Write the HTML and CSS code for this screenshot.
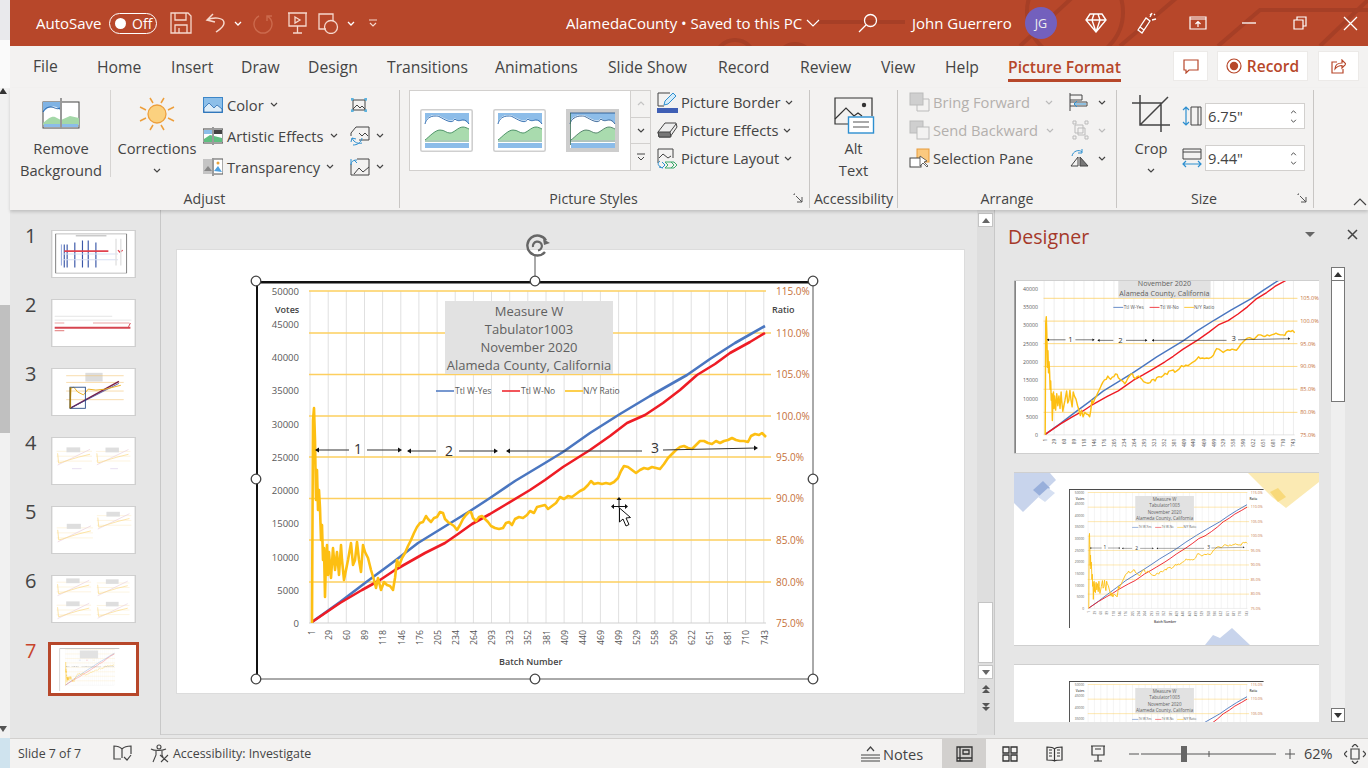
FILE: index.html
```html
<!DOCTYPE html>
<html lang="en">
<head>
<meta charset="utf-8">
<title>AlamedaCounty - PowerPoint</title>
<link rel="stylesheet" href="styles.css">
</head>
<body>
<svg class="sprite" xmlns="http://www.w3.org/2000/svg">
  <symbol id="chev" viewBox="0 0 8 5"><path d="M1 1l3 3 3-3" fill="none" stroke="#444" stroke-width="1.2"/></symbol>
  <symbol id="chevw" viewBox="0 0 8 5"><path d="M1 1l3 3 3-3" fill="none" stroke="#fff" stroke-width="1.3"/></symbol>
  <symbol id="launch" viewBox="0 0 10 10"><path d="M1 1v1M1 1h1M3 3l6 6M9 4v5H4" fill="none" stroke="#555" stroke-width="1"/></symbol>

  <symbol id="pic" viewBox="0 0 53 43">
    <rect x=".8" y=".8" width="51.4" height="41.4" rx="1.5" fill="#fff" stroke="#cfcfcf" stroke-width="1.6"/>
    <path d="M5 4h44v11c-2-3-4-4-6-4s-5 2-8-2c-2 3-4 3-7 2s-6-3-8-4-3-1-5-1c-5 0-9 3-10 8z" fill="#8dbde9"/>
    <path d="M5 15c1-5 5-8 10-8 2 0 3 0 5 1s5 3 8 4 5 1 7-2c3 3 6 1 8 1s4 1 6 4" fill="none" stroke="#1d5fa8" stroke-width=".9"/>
    <path d="M5 31c4-3 10-10 15-10s6 3 10 3 8-6 13-6c2 0 4 1 6 2v11z" fill="#a9dbae"/>
    <path d="M5 31c4-3 10-10 15-10s6 3 10 3 8-6 13-6c2 0 4 1 6 2M5 32h44" fill="none" stroke="#2f7d4f" stroke-width=".8"/>
    <rect x="5" y="34" width="44" height="5" fill="#8cbce9"/>
  </symbol>
  <symbol id="pic3" viewBox="0 0 53 43">
    <rect width="53" height="43" fill="#cdcdcd"/>
    <rect x="4" y="4" width="45" height="35" fill="#fff"/>
    <path d="M4 4h45v11c-2-3-4-4-6-4s-5 2-8-2c-2 3-4 3-7 2s-6-3-8-4-3-1-5-1c-5 0-10 3-11 8z" fill="#8dbde9"/>
    <path d="M4 15c1-5 6-8 11-8 2 0 3 0 5 1s5 3 8 4 5 1 7-2c3 3 6 1 8 1s4 1 6 4M4 4h45" fill="none" stroke="#2a5a90" stroke-width=".9"/>
    <path d="M5 31c4-3 10-10 15-10s6 3 10 3 8-6 13-6c2 0 4 1 6 2v11z" fill="#a9dbae"/>
    <path d="M5 31c4-3 10-10 15-10s6 3 10 3 8-6 13-6c2 0 4 1 6 2M4 32h45M4.5 4v32" fill="none" stroke="#3a6d55" stroke-width=".8"/>
    <rect x="5" y="34" width="44" height="5" fill="#8cbce9"/>
  </symbol>

  <symbol id="plot" viewBox="256 281 557 398">
    <rect x="256" y="281" width="557" height="398" fill="#fff"/>
    <path d="M310 291V623M328.2 291V623M346.3 291V623M364.5 291V623M382.6 291V623M400.8 291V623M418.9 291V623M437.1 291V623M455.2 291V623M473.4 291V623M491.5 291V623M509.7 291V623M527.8 291V623M546 291V623M564.1 291V623M582.3 291V623M600.4 291V623M618.6 291V623M636.7 291V623M654.9 291V623M673 291V623M691.2 291V623M709.3 291V623M727.5 291V623M745.6 291V623M763.8 291V623" stroke="#e0e0e0" stroke-width="1" fill="none"/>
    <path d="M309 623H766" stroke="#d0d0d0" stroke-width="1"/>
    <path d="M309 291H766M309 333H771M309 374.500H771M309 416H771M309 457H771M309 498.500H771M309 540H771M309 582H771" stroke="#fdcf5f" stroke-width="1.4" fill="none"/>
    <rect x="445" y="301" width="168" height="73" fill="#e2e2e2"/>
    <polyline points="312,622 340,602 365,583 392,563 418,543 444,527 470,511 490,498 515,481 545,463 563,452 590,433 620,414 650,396 687,375 710,359 735,343 765,326" fill="none" stroke="#4a76c0" stroke-width="2.6" stroke-linejoin="round"/>
    <polyline points="312,622 340,603 362,590 380,580 395,570 425,553 445,543 458,534 472,524 490,514 505,505 530,490 545,480 563,467 590,450 610,436 627,423 645,415 663,403 680,390 697,375 715,364 730,353 750,342 765,333" fill="none" stroke="#ee1c25" stroke-width="2.6" stroke-linejoin="round"/>
    <polyline points="312,623 313,420 314,408 315,440 316,500 317,470 318,510 319,490 320,508 321,540 322,525 323,560 324,548 325,597 326,560 327,545 328,575 329,552 331,578 333,548 335,570 337,552 339,575 341,545 342,560 344,580 346,570 348,560 351,543 353,565 355,560 357,542 359,560 361,572 363,545 365,552 368,558 371,570 374,580 376,588 378,578 381,590 384,582 387,585 390,586 393,590 395,578 397,560 399,566 402,558 405,553 408,546 411,540 414,533 417,527 420,523 423,522 426,516 428,519 431,522 434,518 437,517 440,512 443,513 445,519 448,522 451,524 454,526 457,530 460,525 463,519 466,515 469,512 471,512 473,518 476,521 479,517 482,516 485,519 488,522 491,526 495,528 499,529 503,528 506,523 509,522 512,525 515,519 519,517 523,518 527,515 530,511 534,513 537,507 541,506 545,505 548,509 552,506 556,503 560,497 564,499 568,496 572,497 576,494 580,491 584,489 588,485 591,481 594,484 598,483 602,484 606,483 610,484 614,482 618,478 621,471 624,466 628,467 632,470 636,473 640,470 644,468 648,469 652,467 656,468 660,469 664,464 668,458 672,454 676,450 680,447 684,446 688,448 692,449 696,445 700,441 704,441 708,443 712,444 716,441 720,443 724,441 728,440 732,438 736,440 740,441 744,441 748,442 751,436 755,434 759,435 762,433 764,435 766,437" fill="none" stroke="#fdbf12" stroke-width="2.6" stroke-linejoin="round"/>
    <path d="M316 450H349M367 450H400M408 451H436M459 451H496M507 451H642M663 450L756 448" stroke="#333" stroke-width="1.2" fill="none"/>
    <g fill="#111"><path d="M315 450l4-2.500v5zM402 450l-4-2.500v5zM407 451l4-2.500v5zM498 451l-4-2.500v5zM506 451l4-2.500v5zM758 448l-4-2.500v5z"/></g>
    <path d="M436 391H454" stroke="#4a76c0" stroke-width="1.500"/><path d="M502 391H520" stroke="#ee1c25" stroke-width="1.500"/><path d="M565 391H583" stroke="#fdbf12" stroke-width="1.500"/>
    <path d="M256.500 679V282H813" fill="none" stroke="#111" stroke-width="3"/>
  </symbol>

  <symbol id="chart" viewBox="256 281 557 398">
    <use href="#plot" x="256" y="281" width="557" height="398"/>
    <g class="ct ct-title">
      <text x="529" y="315.500">Measure W</text><text x="529" y="333.500">Tabulator1003</text><text x="529" y="351.500">November 2020</text><text x="529" y="369.500">Alameda County, California</text>
    </g>
    <g class="ct ct-num"><text x="358" y="454">1</text><text x="449" y="456">2</text><text x="655" y="453">3</text></g>
    <g class="ct ct-leg"><text x="455" y="394">Ttl W-Yes</text><text x="521" y="394">Ttl W-No</text><text x="583" y="394">N/Y Ratio</text></g>
    <g class="ct ct-yl">
      <text x="299" y="294.500">50000</text><text x="299" y="327.500">45000</text><text x="299" y="361">40000</text><text x="299" y="394">35000</text><text x="299" y="427.500">30000</text><text x="299" y="460.500">25000</text><text x="299" y="494">20000</text><text x="299" y="527">15000</text><text x="299" y="560.500">10000</text><text x="299" y="593.500">5000</text><text x="299" y="627">0</text>
    </g>
    <g class="ct ct-yr">
      <text x="776" y="294.500">115.0%</text><text x="776" y="336.500">110.0%</text><text x="776" y="378">105.0%</text><text x="776" y="419.500">100.0%</text><text x="776" y="460.500">95.0%</text><text x="776" y="502">90.0%</text><text x="776" y="543.500">85.0%</text><text x="776" y="585.500">80.0%</text><text x="776" y="627">75.0%</text>
    </g>
    <g class="ct ct-b"><text x="275" y="312.500">Votes</text><text x="772" y="312.500">Ratio</text><text x="499" y="664.500">Batch Number</text></g>
    <g class="ct ct-x">
      <text transform="rotate(-90 315 630)" x="315" y="630">1</text><text transform="rotate(-90 332 630)" x="332" y="630">29</text><text transform="rotate(-90 350 630)" x="350" y="630">60</text><text transform="rotate(-90 368 630)" x="368" y="630">89</text><text transform="rotate(-90 386 630)" x="386" y="630">118</text><text transform="rotate(-90 404.500 630)" x="404.500" y="630">146</text><text transform="rotate(-90 422.500 630)" x="422.500" y="630">176</text><text transform="rotate(-90 440.500 630)" x="440.500" y="630">205</text><text transform="rotate(-90 458.500 630)" x="458.500" y="630">234</text><text transform="rotate(-90 477 630)" x="477" y="630">264</text><text transform="rotate(-90 495 630)" x="495" y="630">293</text><text transform="rotate(-90 513 630)" x="513" y="630">323</text><text transform="rotate(-90 531 630)" x="531" y="630">352</text><text transform="rotate(-90 549.500 630)" x="549.500" y="630">381</text><text transform="rotate(-90 567.500 630)" x="567.500" y="630">409</text><text transform="rotate(-90 585.500 630)" x="585.500" y="630">440</text><text transform="rotate(-90 604 630)" x="604" y="630">469</text><text transform="rotate(-90 622 630)" x="622" y="630">499</text><text transform="rotate(-90 640 630)" x="640" y="630">529</text><text transform="rotate(-90 658 630)" x="658" y="630">558</text><text transform="rotate(-90 676.500 630)" x="676.500" y="630">590</text><text transform="rotate(-90 694.500 630)" x="694.500" y="630">622</text><text transform="rotate(-90 712.500 630)" x="712.500" y="630">651</text><text transform="rotate(-90 731 630)" x="731" y="630">681</text><text transform="rotate(-90 749 630)" x="749" y="630">710</text><text transform="rotate(-90 767.500 630)" x="767.500" y="630">743</text>
    </g>
  </symbol>

  <symbol id="faint" viewBox="0 0 40 22">
    <path d="M2 6H38M2 11H38M2 16H38" stroke="#fbecc9" stroke-width=".6" fill="none"/>
    <rect x="12" y="2" width="14" height="5" fill="#dedede"/>
    <path d="M3 20L36 4" stroke="#ecd5df" stroke-width=".8" fill="none"/>
    <path d="M3 8L4 18 8 17 14 15 24 12 36 9" stroke="#fbdd92" stroke-width=".8" fill="none"/>
  </symbol>
</svg>

<div class="screen">
  <aside class="edge">
    <div class="edge-a"></div>
    <div class="edge-b"></div>
    <div class="edge-c"><svg class="edge-arrow" width="8" height="6" viewBox="0 0 8 6"><path d="M4 0l4 6H0z" fill="#333"/></svg></div>
    <div class="edge-thumb"></div>
    <div class="edge-d"><svg class="edge-arrow" width="8" height="6" viewBox="0 0 8 6"><path d="M4 6L8 0H0z" fill="#555"/></svg></div>
    <div class="edge-e"></div>
  </aside>

  <div class="app">
    <header class="titlebar">
      <svg class="title-decor" width="1358" height="46" viewBox="10 0 1358 46"><g fill="none" stroke="#a63f26" stroke-width="4"><path d="M815 22H905"/><circle cx="735" cy="60" r="20"/><circle cx="795" cy="62" r="18"/><circle cx="1075" cy="12" r="48"/><path d="M1020 46L1075 -5M1120 46L1180 -5"/><path d="M1218 46L1260 10H1368"/><path d="M1320 46L1368 0"/></g></svg>
      <div class="qat">
        <span class="autosave">AutoSave</span>
        <span class="toggle"><span class="knob"></span><span class="off">Off</span></span>
        <svg class="q q-save" width="22" height="22" viewBox="0 0 22 22" fill="none" stroke="#f6d8cd" stroke-width="1.300"><path d="M1 1h17l3 3v17H1zM5 1v7h11V1M5 21v-8h12v8M9 21v-5"/></svg>
        <svg class="q q-undo" width="21" height="20" viewBox="0 0 21 20" fill="none" stroke="#f6d8cd" stroke-width="1.500"><path d="M8 1L2 7l8 2M2 7c6-3 17-3 17 3 0 4-5 7-8 9"/></svg>
        <svg class="q-chev" width="8" height="5"><use href="#chevw"/></svg>
        <svg class="q q-redo" width="21" height="21" viewBox="0 0 21 21" fill="none" stroke="#cc6a4d" stroke-width="1.400"><path d="M14 3a9 9 0 1 1-8 0M14 8V3h5"/></svg>
        <svg class="q q-show" width="21" height="22" viewBox="0 0 21 22" fill="none" stroke="#f6d8cd" stroke-width="1.300"><path d="M1 1h19M2 1v13h17V1M10.500 14v7M6 21h9"/><path d="M8 5l5 3-5 3z"/></svg>
        <svg class="q q-shape" width="21" height="21" viewBox="0 0 21 21" fill="none" stroke="#f6d8cd" stroke-width="1.300"><path d="M8 16H1V1h14v7"/><circle cx="13" cy="14" r="6.500"/></svg>
        <svg class="q-chev" width="8" height="5"><use href="#chevw"/></svg>
        <svg class="q-cust" width="10" height="8" viewBox="0 0 10 8" fill="none" stroke="#f6d8cd" stroke-width="1.200"><path d="M1 1h8M2 4l3 3 3-3"/></svg>
      </div>
      <div class="doc">
        <span class="doc-name">AlamedaCounty • Saved to this PC</span>
        <svg class="doc-chev" width="14" height="8" viewBox="0 0 14 8"><path d="M1 1l6 6 6-6" fill="none" stroke="#fff" stroke-width="1.200"/></svg>
        <svg class="doc-search" width="20" height="20" viewBox="0 0 20 20" fill="none" stroke="#fff" stroke-width="1.300"><circle cx="12.500" cy="7.500" r="6"/><path d="M8 12l-7 7"/></svg>
      </div>
      <div class="who">
        <span class="who-name">John Guerrero</span>
        <span class="avatar">JG</span>
        <span class="wb"><svg width="22" height="20" viewBox="0 0 22 20" fill="none" stroke="#fff" stroke-width="1.400"><path d="M5 1h12l4 6-10 12L1 7zM1 7h20M7 7l4 12 4-12M7 7l2-6M15 7l-2-6"/></svg></span>
        <span class="wb"><svg width="20" height="22" viewBox="0 0 20 22" fill="none" stroke="#fff" stroke-width="1.300"><path d="M1 18l4 3 8-12-4-3zM3 15l4 3M13 5l2-4M15 8l4-1M13 2l1 1M17 3l1-1"/></svg></span>
        <span class="wb"><svg width="18" height="14" viewBox="0 0 18 14" fill="none" stroke="#fff" stroke-width="1.200"><path d="M1 1h16v12H1zM1 3h16M9 11V6M6.500 8L9 5.500 11.500 8"/></svg></span>
        <span class="wb"><svg width="14" height="2" viewBox="0 0 14 2"><path d="M0 1h14" stroke="#fff" stroke-width="1.300"/></svg></span>
        <span class="wb"><svg width="14" height="14" viewBox="0 0 14 14" fill="none" stroke="#fff" stroke-width="1.200"><path d="M1 4h9v9H1zM4 4V1h9v9h-3"/></svg></span>
        <span class="wb wb-close"><svg width="15" height="15" viewBox="0 0 15 15"><path d="M1 1l13 13M14 1L1 14" stroke="#fff" stroke-width="1.300"/></svg></span>
      </div>
    </header>

    <nav class="tabs">
      <span class="tab tab-file">File</span><span class="tab">Home</span><span class="tab">Insert</span><span class="tab">Draw</span><span class="tab">Design</span><span class="tab">Transitions</span><span class="tab">Animations</span><span class="tab">Slide Show</span><span class="tab">Record</span><span class="tab">Review</span><span class="tab">View</span><span class="tab">Help</span><span class="tab tab-on">Picture Format</span>
      <span class="tbtn"><svg width="16" height="15" viewBox="0 0 16 15" fill="none" stroke="#b7472a" stroke-width="1.200"><path d="M1 1h14v10H6l-3 3v-3H1z"/></svg></span>
      <span class="gapb"></span>
      <span class="tbtn tbtn-rec"><svg width="16" height="16" viewBox="0 0 16 16"><circle cx="8" cy="8" r="7" fill="none" stroke="#b7472a" stroke-width="1.200"/><circle cx="8" cy="8" r="4.200" fill="#b7472a"/></svg><b>Record</b></span>
      <span class="gapb"></span>
      <span class="tbtn"><svg width="15" height="15" viewBox="0 0 15 15" fill="none" stroke="#b7472a" stroke-width="1.200"><path d="M6 3H1v11h11v-4M4 10c0-4 3-6 7-6V1l4 4-4 4V6.500c-3 0-5 1-7 3.500z"/></svg></span>
    </nav>

    <section class="ribbon">
      <div class="group g-adjust">
        <div class="gbody">
          <div class="big big-sep">
            <span class="bigico"><svg width="38" height="31" viewBox="0 0 38 31"><rect x="1" y="4" width="36" height="26" fill="#fff" stroke="#444"/><path d="M1 4h18v10C15 6 6 7 1 15z" fill="#7fb3e4"/><path d="M1 25c5-4 8-7 12-6l6 3 9-4 9 2v7H1z" fill="#a4d8a8"/><rect x="2" y="26" width="34" height="3" fill="#8cbce9"/><path d="M1 14c2-4 5-5 8-5 3 0 6 3 9 1" fill="none" stroke="#1d5fa8"/><rect x="18" y="0" width="2" height="31" fill="#999"/></svg></span>
            <span class="bl">Remove</span><span class="bl">Background</span>
          </div>
          <div class="big">
            <span class="bigico"><svg width="36" height="36" viewBox="0 0 36 36"><circle cx="18" cy="18" r="9" fill="#fbd17f" stroke="#ed9f3c" stroke-width="1.300"/><path d="M11 2l3 5M25 2l-3 5M1 11l6 3M35 11l-6 3M1 25l6-3M35 25l-6-3M11 34l3-5M25 34l-3-5" stroke="#ed9f3c" stroke-width="1.500" fill="none"/></svg></span>
            <span class="bl">Corrections</span><span class="bl"><svg width="8" height="5"><use href="#chev"/></svg></span>
          </div>
          <div class="col col-adj">
            <div class="row"><svg width="20" height="16" viewBox="0 0 20 16"><rect x=".5" y=".5" width="19" height="15" fill="#8cbfe9" stroke="#3c86c8"/><path d="M1 11l5-5 5 5 3-3 5 4v3H1z" fill="#dcedf9" stroke="#1d5fa8" stroke-width=".7"/></svg><span>Color</span><svg class="cv" width="8" height="5"><use href="#chev"/></svg></div>
            <div class="row"><svg width="20" height="18" viewBox="0 0 20 18"><rect y="2" width="20" height="14" fill="#fff" stroke="#444"/><rect x="1" y="3" width="18" height="4" fill="#444"/><path d="M1 12l6-4 12 3v4H1z" fill="#5fbf80"/><rect x="1" y="3" width="8" height="4" fill="#8cbfe9"/><rect x="9" y="0" width="2" height="18" fill="#9a9a9a"/></svg><span>Artistic Effects</span><svg class="cv" width="8" height="5"><use href="#chev"/></svg></div>
            <div class="row"><svg width="20" height="18" viewBox="0 0 20 18"><rect y="1" width="9" height="15" fill="#c4c4c4"/><rect x="10" y="1" width="10" height="15" fill="#fff" stroke="#555"/><path d="M1 13l4-5 4 5z" fill="#888"/><path d="M11 13l4-5 4 6z" fill="#4ea1e0"/><circle cx="15" cy="5" r="1.500" fill="#e8a33c"/><rect x="9" y="0" width="2" height="18" fill="#9a9a9a"/></svg><span>Transparency</span><svg class="cv" width="8" height="5"><use href="#chev"/></svg></div>
          </div>
          <div class="col col-adj2">
            <div class="row"><svg width="18" height="16" viewBox="0 0 18 16"><path d="M3 3h12v10H3z" fill="none" stroke="#444"/><path d="M3 12l4-4 3 3 2-2 3 3" fill="none" stroke="#444"/><path d="M1 2h3M2 1v3M14 2h3M16 1v3M1 14h3M2 12v3M14 14h3M16 12v3" stroke="#2d9fd9" fill="none"/></svg></div>
            <div class="row"><svg width="20" height="20" viewBox="0 0 20 20"><path d="M6 1h13v13H9M6 1L1 7v3" fill="none" stroke="#444"/><path d="M9 7l3 3 3-3 3 3" fill="none" stroke="#444"/><path d="M2 12c2 5 7 6 10 5M2 12l-1 4M2 12l4 1M12 12c-1 5-5 7-9 7" fill="none" stroke="#2d8fd0"/></svg><svg class="cv2" width="8" height="5"><use href="#chev"/></svg></div>
            <div class="row"><svg width="20" height="18" viewBox="0 0 20 18"><path d="M1 6v11h18V1H7" fill="none" stroke="#444"/><path d="M4 16l5-6 4 4 6-5" fill="none" stroke="#444"/><path d="M1 7c0-4 3-5 6-5M1 1v5M7 5L4 2" fill="none" stroke="#2d8fd0"/></svg><svg class="cv2" width="8" height="5"><use href="#chev"/></svg></div>
          </div>
        </div>
        <div class="glabel"><span>Adjust</span></div>
      </div>

      <div class="group g-styles">
        <div class="gbody">
          <div class="gallery">
            <div class="gal-items"><svg width="53" height="43"><use href="#pic"/></svg><svg width="53" height="43"><use href="#pic"/></svg><svg width="53" height="43"><use href="#pic3"/></svg></div>
            <div class="gal-scroll">
              <span><svg width="8" height="5" viewBox="0 0 8 5"><path d="M1 4l3-3 3 3" fill="none" stroke="#c4c4c4" stroke-width="1.200"/></svg></span>
              <span><svg width="8" height="5"><use href="#chev"/></svg></span>
              <span><svg width="10" height="9" viewBox="0 0 10 9" fill="none" stroke="#444"><path d="M1 1h8M2 4l3 3 3-3"/></svg></span>
            </div>
          </div>
          <div class="col col-pic">
            <div class="row28"><svg width="21" height="21" viewBox="0 0 21 21"><rect y="16" width="21" height="5" fill="#3f5fb5"/><path d="M1 14V1h12M1 14h6" fill="none" stroke="#444"/><path d="M7 13l1-4 8-8 3 3-8 8z" fill="#d5ecfa" stroke="#2d8fd0"/></svg><span>Picture Border</span><svg class="cv" width="8" height="5"><use href="#chev"/></svg></div>
            <div class="row28"><svg width="21" height="18" viewBox="0 0 21 18"><path d="M1 11l7-9h11l1 4-7 10H2z" fill="#eee" stroke="#444"/><path d="M1 11h12l1 5H2z" fill="#777" stroke="#444"/><path d="M13 11l6-8" stroke="#444"/></svg><span>Picture Effects</span><svg class="cv" width="8" height="5"><use href="#chev"/></svg></div>
            <div class="row28"><svg width="21" height="21" viewBox="0 0 21 21"><path d="M1 15V1h15v9" fill="none" stroke="#444"/><path d="M2 10l4-4 5 4 3-2" fill="none" stroke="#444"/><path d="M3 13c-3 2-2 5 1 6M2 19l4 1M5 14l3 3-3 3" fill="none" stroke="#2d8fd0"/><path d="M8 14h6l3 3-3 3H8l3-3zM14 14h3l3 3-3 3h-3" fill="none" stroke="#3dab6c"/></svg><span>Picture Layout</span><svg class="cv" width="8" height="5"><use href="#chev"/></svg></div>
          </div>
        </div>
        <div class="glabel"><span>Picture Styles</span><svg class="launch" width="10" height="10"><use href="#launch"/></svg></div>
      </div>

      <div class="group g-acc">
        <div class="gbody">
          <div class="big big-fill">
            <span class="bigico"><svg class="ico-alt" width="41" height="37" viewBox="0 0 41 37"><path d="M28 27H1V1h37v18" fill="none" stroke="#333" stroke-width="1.200"/><path d="M1 22l11-11 8 8 4-3 4 3" fill="none" stroke="#333" stroke-width="1.200"/><circle cx="30" cy="8" r="2.200" fill="#333"/><rect x="14.500" y="20" width="25" height="16" fill="#fff" stroke="#2d8fd0" stroke-width="1.400"/><path d="M19 25h16M19 30h16" stroke="#555" stroke-width="1.200"/></svg></span>
            <span class="bl">Alt</span><span class="bl">Text</span>
          </div>
        </div>
        <div class="glabel"><span>Accessibility</span></div>
      </div>

      <div class="group g-arr">
        <div class="gbody">
          <div class="col col-arr1">
            <div class="row28 dim"><svg width="21" height="20" viewBox="0 0 21 20"><rect x="1" y="1" width="13" height="12" fill="#cfcfcf" stroke="#bbb"/><path d="M14 7h6v12H8v-6" fill="none" stroke="#bbb"/></svg><span>Bring Forward</span><svg class="cv3" width="8" height="5" viewBox="0 0 8 5"><path d="M1 1l3 3 3-3" fill="none" stroke="#bbb" stroke-width="1.200"/></svg></div>
            <div class="row28 dim"><svg width="21" height="20" viewBox="0 0 21 20"><rect x="1" y="1" width="13" height="12" fill="#cfcfcf" stroke="#bbb"/><rect x="8" y="7" width="12" height="12" fill="#f3f2f1" stroke="#bbb"/></svg><span>Send Backward</span><svg class="cv3 cv3b" width="8" height="5" viewBox="0 0 8 5"><path d="M1 1l3 3 3-3" fill="none" stroke="#bbb" stroke-width="1.200"/></svg></div>
            <div class="row28"><svg width="21" height="20" viewBox="0 0 21 20"><rect x="8" y="1" width="12" height="13" fill="#fbc97f" stroke="#e89b3c"/><rect x="1" y="10" width="11" height="9" fill="#fff" stroke="#444"/><path d="M11 8v10l3-3 4 4 1-1-4-4 3-1z" fill="#fff" stroke="#444" stroke-width=".8"/></svg><span>Selection Pane</span></div>
          </div>
          <div class="col col-arr2">
            <div class="row28"><svg width="20" height="20" viewBox="0 0 20 20"><path d="M1 1v18" stroke="#444" fill="none"/><path d="M1 3h12v5H1M1 10h17v4H1" fill="none" stroke="#444"/><path d="M17 12H5M8 9l-3 3 3 3" fill="none" stroke="#2d8fd0"/></svg><svg class="cv2" width="8" height="5"><use href="#chev"/></svg></div>
            <div class="row28"><svg width="20" height="20" viewBox="0 0 20 20" fill="none" stroke="#bbb"><path d="M4 1h3v3H4zM16 1h3v3h-3zM4 16h3v3H4zM16 16h3v3h-3zM6 5h8v8H6zM9 8h7v7H9z"/></svg><svg class="cv2" width="8" height="5" viewBox="0 0 8 5"><path d="M1 1l3 3 3-3" fill="none" stroke="#bbb" stroke-width="1.200"/></svg></div>
            <div class="row28"><svg width="20" height="20" viewBox="0 0 20 20"><path d="M2 18l7-9v9z" fill="none" stroke="#444"/><path d="M11 9l8 9h-8z" fill="#777" stroke="#444"/><path d="M3 8c1-5 7-7 10-4M13 1v4H9" fill="none" stroke="#2d8fd0"/></svg><svg class="cv2" width="8" height="5"><use href="#chev"/></svg></div>
          </div>
        </div>
        <div class="glabel"><span>Arrange</span></div>
      </div>

      <div class="group g-size">
        <div class="gbody">
          <div class="big big-crop">
            <span class="bigico"><svg width="38" height="38" viewBox="0 0 38 38" fill="none" stroke="#444" stroke-width="1.500"><path d="M0 8h29v29M8 0v30h30M8 30L36 2"/></svg></span>
            <span class="bl">Crop</span><span class="bl"><svg width="8" height="5"><use href="#chev"/></svg></span>
          </div>
          <div class="fields">
            <div class="field"><svg width="20" height="20" viewBox="0 0 20 20"><path d="M9 1h10v18H9zM16 1v18" fill="none" stroke="#444"/><path d="M4 1v18M1 4l3-3 3 3M1 16l3 3 3-3" fill="none" stroke="#2d8fd0" stroke-width="1.200"/></svg><span class="input">6.75"<span class="spin"><svg width="7" height="4" viewBox="0 0 8 5"><path d="M1 4l3-3 3 3" fill="none" stroke="#444" stroke-width="1.200"/></svg><svg width="7" height="4"><use href="#chev"/></svg></span></span></div>
            <div class="field"><svg width="20" height="20" viewBox="0 0 20 20"><path d="M1 1h18v10H1zM1 4h18" fill="none" stroke="#444"/><path d="M1 16h18M4 13l-3 3 3 3M16 13l3 3-3 3" fill="none" stroke="#2d8fd0" stroke-width="1.200"/></svg><span class="input">9.44"<span class="spin"><svg width="7" height="4" viewBox="0 0 8 5"><path d="M1 4l3-3 3 3" fill="none" stroke="#444" stroke-width="1.200"/></svg><svg width="7" height="4"><use href="#chev"/></svg></span></span></div>
          </div>
        </div>
        <div class="glabel"><span>Size</span><svg class="launch" width="10" height="10"><use href="#launch"/></svg></div>
      </div>

      <div class="collapse"><svg width="14" height="8" viewBox="0 0 14 8"><path d="M1 7l6-6 6 6" fill="none" stroke="#444" stroke-width="1.200"/></svg></div>
    </section>

    <main class="work">
      <aside class="slides">
        <div class="s"><span class="n">1</span>
          <svg class="th" width="85" height="48" viewBox="0 0 85 48"><rect width="85" height="48" fill="#fff"/><path d="M3 3h74M3 44h74" stroke="#777" stroke-width=".5" fill="none"/><path d="M3 3v41M77 3v41" stroke="#444" stroke-width=".7" fill="none"/><path d="M24 5h32" stroke="#bbb" stroke-width="1.200"/><path d="M12 14v24M15 14v24M23 12v26M31 10v28M37 10v28M45 12v26" stroke="#3a57a8" stroke-width="1.200"/><path d="M12 21h46" stroke="#e1414e" stroke-width="1.800"/><path d="M10 24h58M10 30h58" stroke="#d5def2" stroke-width="1"/><path d="M68 20l2 2 3-2" stroke="#e1414e" stroke-width="1.300" fill="none"/><path d="M9 14v22" stroke="#8aa0d8" stroke-width="1"/><path d="M66 8v28M71 8v28" stroke="#e3e3e3" stroke-width="1.500"/></svg>
        </div>
        <div class="s"><span class="n">2</span>
          <svg class="th" width="85" height="48" viewBox="0 0 85 48"><rect width="85" height="48" fill="#fff"/><path d="M2 17h60M2 21h80" stroke="#d9d9d9" stroke-width=".7"/><path d="M2 24h10M42 24h38" stroke="#e9a0a0" stroke-width="1"/><path d="M2 29h79" stroke="#d64550" stroke-width="2"/><path d="M2 32h10" stroke="#e58888" stroke-width="1.200"/><path d="M79 28l2-4" stroke="#d64550" stroke-width="1"/></svg>
        </div>
        <div class="s"><span class="n">3</span>
          <svg class="th" width="85" height="48" viewBox="0 0 85 48"><rect width="85" height="48" fill="#fff"/><rect x="34" y="4" width="18" height="9" fill="#ddd"/><path d="M14 7h60M14 14h60M14 23h60M14 32h60" stroke="#f4c470" stroke-width=".6" fill="none"/><path d="M18 41L69 13" stroke="#7a1d44" stroke-width="1.500"/><path d="M18 41L69 15" stroke="#3a3a8a" stroke-width=".8"/><path d="M18 41L19 20l3-1 4 5 6 3 5-6 8 1 10-1 16-4" stroke="#ecb01e" stroke-width="1" fill="none"/><rect x="18" y="19" width="16" height="22" fill="none" stroke="#1f4480" stroke-width=".9"/><rect x="17.500" y="19" width="1.600" height="22" fill="#a57a10"/></svg>
        </div>
        <div class="s"><span class="n">4</span>
          <svg class="th" width="85" height="48" viewBox="0 0 85 48"><rect width="85" height="48" fill="#fff"/><use href="#faint" x="2" y="6" width="41" height="26"/><use href="#faint" x="43" y="6" width="40" height="26"/><path d="M20 32h10M60 32h8" stroke="#d8c8e8" stroke-width=".6"/></svg>
        </div>
        <div class="s"><span class="n">5</span>
          <svg class="th" width="85" height="48" viewBox="0 0 85 48"><rect width="85" height="48" fill="#fff"/><use href="#faint" x="2" y="12" width="42" height="30"/><use href="#faint" x="44" y="1" width="40" height="26"/></svg>
        </div>
        <div class="s"><span class="n">6</span>
          <svg class="th" width="85" height="48" viewBox="0 0 85 48"><rect width="85" height="48" fill="#fff"/><use href="#faint" x="2" y="0" width="40" height="23"/><use href="#faint" x="44" y="1" width="38" height="22"/><use href="#faint" x="2" y="24" width="40" height="23"/><use href="#faint" x="44" y="24" width="38" height="23"/></svg>
        </div>
        <div class="s s-on"><span class="n">7</span>
          <svg class="th" width="85" height="48" viewBox="0 0 85 48"><rect width="85" height="48" fill="#fff"/><use href="#plot" x="8.500" y="3.300" width="60" height="43"/></svg>
        </div>
      </aside>

      <div class="canvas">
        <div class="slide">
          <svg class="pic-sel" width="557" height="398" viewBox="256 281 557 398">
            <use href="#chart" x="256" y="281" width="557" height="398"/>
            <path d="M535 256V281M813 281V679H256" fill="none" stroke="#555" stroke-width="1"/>
            <path d="M546 240.500A10 10 0 1 0 545 252" fill="none" stroke="#666" stroke-width="2.400"/>
            <path d="M533 247a4.500 4.500 0 1 1 5 3.500" fill="none" stroke="#666" stroke-width="2.200"/>
            <path d="M550 243l-6 2-1-6z" fill="#666"/>
            <g fill="#fff" stroke="#444" stroke-width="1.300"><circle cx="256" cy="281" r="4.800"/><circle cx="535" cy="281" r="4.800"/><circle cx="813" cy="281" r="4.800"/><circle cx="256" cy="479" r="4.800"/><circle cx="813" cy="479" r="4.800"/><circle cx="256" cy="679" r="4.800"/><circle cx="535" cy="679" r="4.800"/><circle cx="813" cy="679" r="4.800"/></g>
            <path d="M619 499v9M612 506.500h15" stroke="#fff" stroke-width="2.400"/>
            <path d="M619 499v9M612 506.500h15" stroke="#111" stroke-width="1"/>
            <path d="M619 497l-2.500 3h5zM611 506.500l3-2.500v5zM628 506.500l-3-2.500v5z" fill="#111"/>
            <path d="M619.500 508v14l3.500-3 3 7 3-1.500-3-6.500 4.500-.5z" fill="#fff" stroke="#111" stroke-width="1"/>
          </svg>
        </div>
      </div>

      <div class="vs">
        <span class="vbtn"><svg width="8" height="5" viewBox="0 0 8 5"><path d="M4 0l4 5H0z" fill="#666"/></svg></span>
        <span class="vthumb"></span>
        <span class="vbtn vdown"><svg width="8" height="5" viewBox="0 0 8 5"><path d="M4 5l4-5H0z" fill="#666"/></svg></span>
        <svg class="vdbl" width="8" height="9" viewBox="0 0 8 9"><path d="M4 0l4 4H0zM4 4l4 4H0z" fill="#555"/></svg>
        <svg class="vdbl vdbl2" width="8" height="9" viewBox="0 0 8 9"><path d="M4 9L8 5H0zM4 5L8 1H0z" fill="#555"/></svg>
      </div>

      <aside class="designer">
        <div class="d-head">
          <span class="d-title">Designer</span>
          <svg class="d-drop" width="10" height="5" viewBox="0 0 10 5"><path d="M0 0h10L5 5z" fill="#666"/></svg>
          <svg class="d-x" width="11" height="11" viewBox="0 0 11 11"><path d="M1 1l9 9M10 1l-9 9" stroke="#444" stroke-width="1.500"/></svg>
        </div>
        <div class="d-body">
          <div class="d-list">
            <svg class="card" width="305" height="172" viewBox="255.500 343 554.500 313"><use href="#chart" x="256" y="281" width="557" height="398"/></svg>
            <svg class="card" width="305" height="172" viewBox="0 0 305 172">
              <rect width="305" height="172" fill="#fff"/>
              <path d="M0 0h36l6 7-33 32-9-9z" fill="#c8d4ec"/><path d="M29 8l7 7-9 9-8-7z" fill="#98afdb"/><path d="M34 15l7 5-10 9-7-5z" fill="#d6e0f2"/>
              <path d="M234 0h71v9l-33 26-14-11z" fill="#fbeab3"/><path d="M256 19l8-4 8 9-8 5z" fill="#f8d97a"/>
              <path d="M191 172l8-10 7 3 12-10 18 17z" fill="#c8d4ec"/>
              <use href="#chart" x="55" y="16" width="195" height="139"/>
            </svg>
            <svg class="card" width="305" height="172" viewBox="0 0 305 172"><rect width="305" height="172" fill="#fff"/><use href="#chart" x="55" y="16" width="195" height="139"/></svg>
          </div>
          <div class="d-scroll">
            <span class="dbtn"><svg width="8" height="5" viewBox="0 0 8 5"><path d="M4 0l4 5H0z" fill="#333"/></svg></span>
            <span class="dthumb"></span>
            <span class="dbtn dbtn-dn"><svg width="8" height="5" viewBox="0 0 8 5"><path d="M4 5l4-5H0z" fill="#333"/></svg></span>
          </div>
        </div>
      </aside>
    </main>

    <footer class="status">
      <span class="st-slide">Slide 7 of 7</span>
      <svg class="st-book" width="19" height="17" viewBox="0 0 19 17" fill="none" stroke="#444" stroke-width="1.200"><path d="M9 4C7 2 4 1 1 1v13h7M9 4c2-2 5-3 9-3v8M9 4v9M11 12l3 3 4-5"/></svg>
      <svg class="st-acc" width="19" height="19" viewBox="0 0 19 19" fill="none" stroke="#444" stroke-width="1.100"><circle cx="9" cy="3" r="2"/><path d="M1 5c3 2 11 2 15 0M6 7v4l-3 7M12 7v4l1 2M10 11l8 7M18 11l-7 7"/></svg>
      <span class="st-acc-t">Accessibility: Investigate</span>
      <span class="st-notes"><svg width="19" height="16" viewBox="0 0 19 16" fill="none" stroke="#444" stroke-width="1.200"><path d="M6 5l3.500-4L13 5M0 9h19M0 12h19M0 15h19"/></svg>Notes</span>
      <span class="vw vw-on"><svg width="17" height="16" viewBox="0 0 17 16" fill="none" stroke="#333" stroke-width="1.300"><path d="M1 1h15v14H1zM4 1v14M1 12h15M7 4h6v4H7z"/></svg></span>
      <span class="vw"><svg width="16" height="16" viewBox="0 0 16 16" fill="none" stroke="#333" stroke-width="1.300"><path d="M1 1h6v6H1zM9 1h6v6H9zM1 9h6v6H1zM9 9h6v6H9z"/></svg></span>
      <span class="vw"><svg width="17" height="16" viewBox="0 0 17 16" fill="none" stroke="#333" stroke-width="1.200"><path d="M8.500 3C7 1 4 1 1 1v13c3 0 6 0 7.500 1 1.500-1 4.500-1 7.500-1V1c-3 0-6 0-7.500 2zM8.500 3v12M3 4h3M3 7h3M3 10h3M11 4h3M11 7h3M11 10h3"/></svg></span>
      <span class="vw"><svg width="16" height="17" viewBox="0 0 16 17" fill="none" stroke="#333" stroke-width="1.200"><path d="M1 1h14M2 1v9h12V1M8 10v6M4 16h8M5 4h6"/></svg></span>
      <svg class="zoom" width="172" height="18" viewBox="0 0 172 18"><path d="M4 9h10M16 9h135M84 6v6M160 9h10M165 4v10" stroke="#555" stroke-width="1" fill="none"/><rect x="56" y="1" width="6" height="16" fill="#666"/></svg>
      <span class="st-pct">62%</span>
      <svg class="st-fit" width="22" height="20" viewBox="0 0 22 20" fill="none" stroke="#444" stroke-width="1.200"><path d="M7 5h8v10H7z"/><path d="M8 3l3-3 3 3M8 17l3 3 3-3M3 7l-3 3 3 3M19 7l3 3-3 3"/></svg>
    </footer>
  </div>
</div>
</body>
</html>
```

FILE: styles.css
```css
* { box-sizing: border-box; }
html, body { margin: 0; padding: 0; }
body { width: 1368px; height: 768px; overflow: hidden; font-family: "Open Sans", "Noto Sans", sans-serif; color: #444; background: #e6e6e6; }
svg { display: block; flex: none; }
.sprite { display: none; }
.screen { display: grid; grid-template-columns: 10px 1358px; width: 1368px; height: 768px; overflow: hidden; }

/* far-left sliver of the window behind */
.edge { display: flex; flex-direction: column; height: 768px; }
.edge-a { height: 40px; background: #e9e9ec; }
.edge-b { height: 48px; background: #fafafa; }
.edge-c { height: 217px; background: #f1f1f1; }
.edge-thumb { height: 128px; background: #c0c0c0; }
.edge-d { height: 305px; background: #f1f1f1; display: flex; flex-direction: column; justify-content: flex-end; padding-bottom: 6px; }
.edge-e { height: 30px; background: #cfe3ee; }
.edge-arrow { margin-left: -1px; }

.app { display: flex; flex-direction: column; width: 1358px; height: 768px; }

/* title bar */
.titlebar { position: relative; flex: none; height: 46px; background: #b7472a; color: #fff; display: grid; grid-template-columns: 556px 346px 456px; align-items: center; overflow: hidden; }
.title-decor { position: absolute; left: 0; top: 0; }
.qat, .doc, .who { position: relative; display: flex; align-items: center; height: 46px; }
.qat { padding-left: 26px; }
.autosave { font-size: 15px; width: 73px; }
.toggle { width: 48px; height: 21px; border: 1.500px solid #fff; border-radius: 11px; display: flex; align-items: center; padding-left: 5px; font-size: 14px; }
.knob { width: 11px; height: 11px; border-radius: 50%; background: #fff; }
.off { margin-left: 6px; }
.q-save { margin-left: 13px; }
.q-undo { margin-left: 13px; }
.q-chev { margin-left: 8px; }
.q-redo { margin-left: 11px; }
.q-show { margin-left: 13px; }
.q-shape { margin-left: 10px; }
.q-cust { margin-left: 13px; }
.doc-name { font-size: 15px; width: 240px; white-space: nowrap; }
.doc-search { margin-left: 38px; }
.who-name { font-size: 15px; width: 113px; white-space: nowrap; }
.avatar { width: 32px; height: 32px; border-radius: 50%; background: #7360bd; font-size: 12.500px; color: #eee; display: flex; align-items: center; justify-content: center; margin-right: 13px; }
.wb { width: 51px; height: 46px; flex: none; display: flex; align-items: center; justify-content: center; }
.wb-close { width: 43px; justify-content: flex-start; padding-left: 18px; }

/* tabs */
.tabs { flex: none; height: 42px; background: #f3f2f1; padding-left: 23px; display: grid; grid-template-columns: 64px 74px 70px 67px 79px 108px 113px 110px 82px 81px 64px 63px 165px 35px 9px 91px 10px 41px; align-items: start; }
.tab { font-size: 15.700px; line-height: 20px; padding-top: 11px; height: 36px; white-space: nowrap; color: #444; justify-self: start; }
.tab-file { padding-top: 10px; }
.tab-on { color: #b7472a; font-weight: 600; border-bottom: 3px solid #b7472a; }
.tbtn { margin-top: 5px; height: 30px; background: #fff; border: 1px solid #eceae8; display: flex; align-items: center; justify-content: center; gap: 5px; font-size: 15.500px; color: #b7472a; }
.tbtn b { font-weight: 600; }

/* ribbon */
.ribbon { position: relative; flex: none; height: 122px; background: #f3f2f1; display: grid; grid-template-columns: 390px 410px 88px 219px 197px 54px; box-shadow: 0 2px 3px rgba(0,0,0,.16); }
.group { display: flex; flex-direction: column; height: 118px; margin-top: 2px; border-right: 1px solid #c8c6c4; }
.gbody { display: flex; height: 100px; }
.glabel { display: flex; align-items: center; height: 16px; font-size: 14.200px; text-align: center; }
.glabel span { flex: 1; white-space: nowrap; }
.launch { margin: 0 6px; }
.big { display: flex; flex-direction: column; align-items: center; width: 92px; font-size: 14.700px; }
.big-sep { width: 101px; height: 87px; border-right: 1px solid #d6d4d2; padding-left: 2px; }
.big-fill { width: 87px; }
.big-crop { width: 65px; padding-left: 3px; }
.bigico { height: 47px; display: flex; align-items: center; justify-content: center; flex: none; }
.ico-alt { margin: 4px 0 0 2px; }
.bl { height: 22px; line-height: 22px; white-space: nowrap; display: flex; align-items: center; }
.col { display: flex; flex-direction: column; font-size: 14.700px; }
.col-adj { width: 147px; margin-top: -1px; }
.col-adj .row { gap: 4px; }
.col-adj2 { width: 48px; margin-top: -1px; }
.row { height: 31.200px; display: flex; align-items: center; white-space: nowrap; }
.row28 { height: 28px; display: flex; align-items: center; white-space: nowrap; gap: 3px; }
.col-pic, .col-arr1, .col-arr2 { margin-top: -2px; }
.cv { margin-left: 2px; }
.cv2 { margin-left: 6px; }
.cv3 { margin-left: 12px; }
.cv3b { margin-left: 5px; }
.gallery { margin: 0 6px 0 9px; width: 242px; height: 81px; display: flex; background: #fff; border: 1px solid #d2d0ce; }
.gal-items { width: 221px; display: flex; align-items: center; gap: 20px; padding-left: 10px; }
.gal-scroll { width: 20px; display: flex; flex-direction: column; border-left: 1px solid #d2d0ce; background: #f3f2f1; }
.gal-scroll span { flex: 1; display: flex; align-items: center; justify-content: center; border-bottom: 1px solid #d2d0ce; }
.gal-scroll span:last-child { border-bottom: 0; }
.g-arr .gbody { padding-left: 11px; }
.col-arr1 { width: 160px; }
.dim { color: #b3b0ad; }
.fields { display: flex; flex-direction: column; gap: 16px; padding-top: 13px; }
.field { height: 26px; display: flex; align-items: center; gap: 3px; }
.input { width: 100px; height: 26px; background: #fff; border: 1px solid #d2d0ce; font-size: 14.700px; padding-left: 2px; display: flex; align-items: center; justify-content: space-between; padding-right: 7px; }
.spin { display: flex; flex-direction: column; gap: 5px; }
.collapse { display: flex; align-items: flex-end; justify-content: flex-end; padding: 0 1px 4px 0; }

/* workspace */
.work { flex: 1; display: grid; grid-template-columns: 151px 816px 18px 373px; background: #e6e6e6; min-height: 0; }
.slides { border-right: 1px solid #c8c8c8; padding-top: 20px; margin-bottom: 3px; }
.s { height: 69px; padding-left: 15px; display: flex; align-items: flex-start; }
.n { width: 26px; font-size: 20px; line-height: 12px; color: #444; }
.th { border: 1px solid #cfcfcf; }
.s-on .n { color: #c8442c; }
.s-on { padding-top: 1px; }
.s-on .th { outline: 3px solid #b7472a; border: 0; }
.canvas { padding: 40px 0 0 16px; margin-bottom: 3px; border-bottom: 1px solid #cfcfcf; }
.slide { width: 787px; height: 443px; background: #fff; box-shadow: 0 0 0 1px #dcdcdc; padding: 31px 0 0 79px; }
.pic-sel { overflow: visible; }

.vs { background: #dedede; border-right: 1px solid #c8c8c8; padding: 3px 1px 0 1px; display: flex; flex-direction: column; align-items: center; margin-bottom: 3px; }
.vbtn { width: 15px; height: 14px; flex: none; background: #fff; border: 1px solid #c4c4c4; display: flex; align-items: center; justify-content: center; }
.vthumb { width: 15px; height: 61px; flex: none; background: #fff; border: 1px solid #c4c4c4; margin-top: 375px; }
.vdown { margin-top: 2px; }
.vdbl { margin-top: 6px; }
.vdbl2 { margin-top: 8px; }

.designer { background: #e6e6e6; display: flex; flex-direction: column; min-width: 0; overflow: hidden; }
.d-head { height: 53px; display: flex; align-items: center; padding-left: 13px; }
.d-title { font-size: 19.600px; color: #a5392a; width: 297px; }
.d-x { margin-left: 32px; margin-top: -4px; }
.d-drop { margin-top: -4px; }
.d-body { height: 459px; display: grid; grid-template-columns: 305px 14px; gap: 12px; padding-left: 19px; }
.d-list { display: flex; flex-direction: column; gap: 20px; padding-top: 18px; height: 459px; overflow: hidden; }
.card { flex: none; box-shadow: 0 0 0 1px #cfcfcf; }
.d-scroll { margin-top: 4px; height: 455px; display: flex; flex-direction: column; background: #efefef; }
.dbtn { height: 14px; background: #fff; border: 1px solid #777; display: flex; align-items: center; justify-content: center; flex: none; }
.dthumb { height: 121px; background: #fff; border: 1px solid #777; border-top: 0; flex: none; }
.dbtn-dn { margin-top: auto; }

/* status */
.status { flex: none; height: 30px; background: #f3f2f1; border-top: 1px solid #d2d0ce; display: flex; align-items: center; font-size: 12.400px; color: #444; }
.st-slide { margin-left: 8px; width: 95px; white-space: nowrap; }
.st-book { margin-right: 18px; }
.st-acc-t { margin-left: 4px; width: 688px; white-space: nowrap; }
.st-notes { display: flex; align-items: center; gap: 3px; font-size: 14.600px; width: 81px; }
.vw { width: 44px; height: 29px; display: flex; align-items: center; justify-content: center; }
.vw-on { background: #d2d0ce; margin-right: 2px; }
.zoom { margin-left: 5px; }
.st-pct { margin-left: 7px; width: 41px; font-size: 14.500px; }
.st-fit { margin-left: -1px; }

/* chart text */
.ct text { font-family: "Open Sans", "Noto Sans", sans-serif; }
.ct-title text { font-size: 13px; fill: #5f5f5f; text-anchor: middle; }
.ct-num text { font-size: 14px; fill: #333; text-anchor: middle; }
.ct-leg text { font-size: 8.500px; fill: #595959; }
.ct-yl text { font-size: 9.500px; fill: #595959; text-anchor: end; }
.ct-yr text { font-size: 10px; fill: #c5703a; }
.ct-b text { font-size: 9px; font-weight: 600; fill: #444; }
.ct-x text { font-size: 8.800px; fill: #555; text-anchor: end; }
```
